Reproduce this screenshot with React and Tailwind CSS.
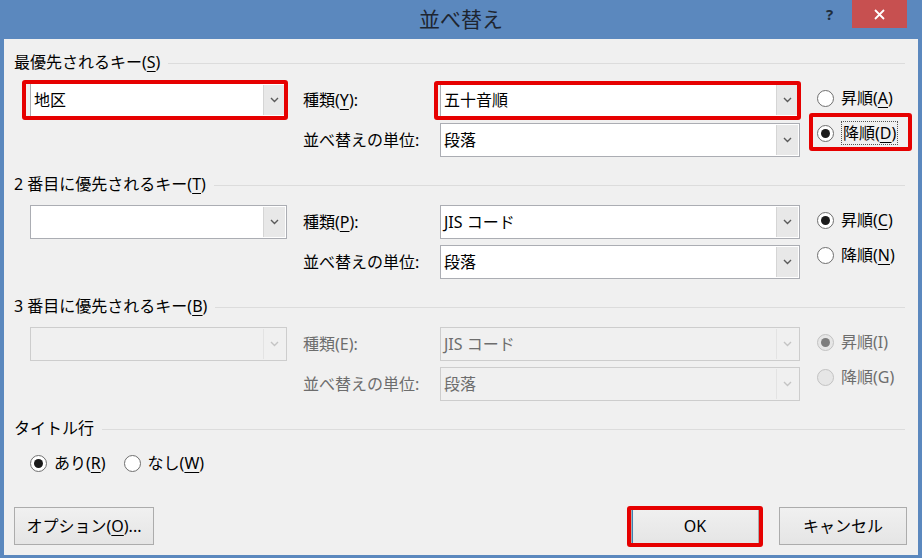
import React from 'react';

const U = ({ children }) => <span className="underline underline-offset-[3px] decoration-1">{children}</span>;

const Chevron = ({ disabled }) => (
  <svg width="9" height="6" viewBox="0 0 9 6">
    <path d="M1 1l3.5 3.5L8 1" stroke={disabled ? '#c4c4c4' : '#5a5a5a'} strokeWidth="1.4" fill="none" />
  </svg>
);

const Combo = ({ value, className = '', disabled }) => (
  <div
    className={
      'flex h-[34px] border ' +
      (disabled ? 'border-[#cdcdcd] bg-[#f0f0f0] text-[#6d6d6d] ' : 'border-[#abadb3] bg-white text-black ') +
      className
    }
  >
    <div className="flex flex-1 items-center pl-[3px] leading-none">{value}</div>
    <div
      className={
        'my-[1px] mr-[1px] flex w-[22px] items-center justify-center border-l ' +
        (disabled ? 'border-[#e3e3e3] bg-[#f0f0f0]' : 'border-[#d5d5d5] bg-[#e8e8e8]')
      }
    >
      <Chevron disabled={disabled} />
    </div>
  </div>
);

const Radio = ({ checked, disabled, children }) => (
  <div className="flex h-[26px] items-center gap-[7px]">
    <div
      className={
        'flex h-[17px] w-[17px] items-center justify-center rounded-full border ' +
        (disabled ? 'border-[#c2c2c2] bg-[#e6e6e6]' : 'border-[#6f6f6f] bg-white')
      }
    >
      {checked && <div className={'h-[9px] w-[9px] rounded-full ' + (disabled ? 'bg-[#7d7d7d]' : 'bg-[#1a1a1a]')} />}
    </div>
    <span className={disabled ? 'text-[#6d6d6d]' : 'text-black'}>{children}</span>
  </div>
);

const RedBox = ({ className }) => (
  <div className={'pointer-events-none absolute rounded-[3px] border-4 border-[#e60000] ' + className} />
);

const GroupHeader = ({ children }) => (
  <div className="flex h-[22px] items-center pr-[2px]">
    <span className="whitespace-nowrap leading-[22px]">{children}</span>
    <div className="ml-[8px] mt-[2px] flex-1 border-t border-[#dcdcdc]" />
  </div>
);

const SortGroup = ({ title, keyCombo, typeLabel, typeCombo, unitCombo, radios, disabled }) => (
  <div className="h-[122px]">
    <GroupHeader>{title}</GroupHeader>
    <div className="mt-[10px] flex pl-[16px]">
      <div className="w-[257px]">{keyCombo}</div>
      <div className={'ml-[16px] flex flex-col gap-[6px] ' + (disabled ? 'text-[#6d6d6d]' : '')}>
        <div className="flex h-[34px] items-center">
          <span className="w-[137px]">{typeLabel}</span>
          {typeCombo}
        </div>
        <div className="flex h-[34px] items-center">
          <span className="w-[137px]">並べ替えの単位:</span>
          {unitCombo}
        </div>
      </div>
      <div className="ml-[17px] flex flex-col gap-[9px] pt-[2px]">{radios}</div>
    </div>
  </div>
);

const Button = ({ children, className = '' }) => (
  <div
    className={
      'flex h-[38px] items-center justify-center border border-[#acacac] bg-gradient-to-b from-[#f0f0f0] to-[#e5e5e5] ' +
      className
    }
  >
    {children}
  </div>
);

export default function App() {
  return (
    <div className="flex h-[558px] w-[922px] flex-col bg-[#5b88be] font-['Noto_Sans','Noto_Sans_CJK_JP',sans-serif] text-[16px] text-black">
      {/* title bar */}
      <div className="relative flex h-[39px] items-center justify-center">
        <span className="text-[21px] leading-none text-[#1e2530]">並べ替え</span>
        <span className="absolute left-[826px] top-[3px] text-[15px] font-bold text-[#1f2d3d]">?</span>
        <div className="absolute right-[15px] top-0 flex h-[28px] w-[55px] items-center justify-center bg-[#c75050]">
          <svg width="11" height="11" viewBox="0 0 11 11">
            <path d="M1 1l9 9M10 1l-9 9" stroke="#fff" strokeWidth="1.8" />
          </svg>
        </div>
      </div>

      {/* client */}
      <div className="mx-[4px] mb-[3px] flex-1 bg-[#f0f0f0] pl-[10px] pr-[11px] pt-[12px]">
        <SortGroup
          title={<>最優先されるキー(<U>S</U>)</>}
          keyCombo={
            <div className="relative">
              <Combo value="地区" />
              <RedBox className="-bottom-[3px] -left-[8px] -right-[1px] -top-[3px]" />
            </div>
          }
          typeLabel={<>種類(<U>Y</U>):</>}
          typeCombo={
            <div className="relative">
              <Combo value="五十音順" className="w-[360px]" />
              <RedBox className="-bottom-[3px] -left-[6px] -right-[1px] -top-[2px]" />
            </div>
          }
          unitCombo={<Combo value="段落" className="w-[360px]" />}
          radios={
            <>
              <Radio>昇順(<U>A</U>)</Radio>
              <div className="relative">
                <Radio checked>
                  <span className="border border-dotted border-[#555] px-[1px]">降順(<U>D</U>)</span>
                </Radio>
                <RedBox className="-left-[8px] -top-[7px] h-[38px] w-[103px]" />
              </div>
            </>
          }
        />
        <SortGroup
          title={<>2 番目に優先されるキー(<U>T</U>)</>}
          keyCombo={<Combo value="" />}
          typeLabel={<>種類(<U>P</U>):</>}
          typeCombo={<Combo value="JIS コード" className="w-[360px]" />}
          unitCombo={<Combo value="段落" className="w-[360px]" />}
          radios={
            <>
              <Radio checked>昇順(<U>C</U>)</Radio>
              <Radio>降順(<U>N</U>)</Radio>
            </>
          }
        />
        <SortGroup
          disabled
          title={<>3 番目に優先されるキー(<U>B</U>)</>}
          keyCombo={<Combo value="" disabled />}
          typeLabel="種類(E):"
          typeCombo={<Combo value="JIS コード" className="w-[360px]" disabled />}
          unitCombo={<Combo value="段落" className="w-[360px]" disabled />}
          radios={
            <>
              <Radio checked disabled>昇順(I)</Radio>
              <Radio disabled>降順(G)</Radio>
            </>
          }
        />

        <GroupHeader>タイトル行</GroupHeader>
        <div className="mt-[11px] flex items-center gap-[18px] pl-[16px]">
          <Radio checked>あり(<U>R</U>)</Radio>
          <Radio>なし(<U>W</U>)</Radio>
        </div>

        <div className="mt-[31px] flex items-center">
          <Button className="w-[140px]">オプション(<U>O</U>)...</Button>
          <div className="relative ml-auto">
            <Button className="w-[128px] border-[#3c7fb1] shadow-[inset_1px_0_0_#3c7fb1]">OK</Button>
            <RedBox className="-bottom-[2px] -left-[4px] -right-[4px] -top-[1px]" />
          </div>
          <Button className="ml-[20px] w-[128px]">キャンセル</Button>
        </div>
      </div>
    </div>
  );
}
